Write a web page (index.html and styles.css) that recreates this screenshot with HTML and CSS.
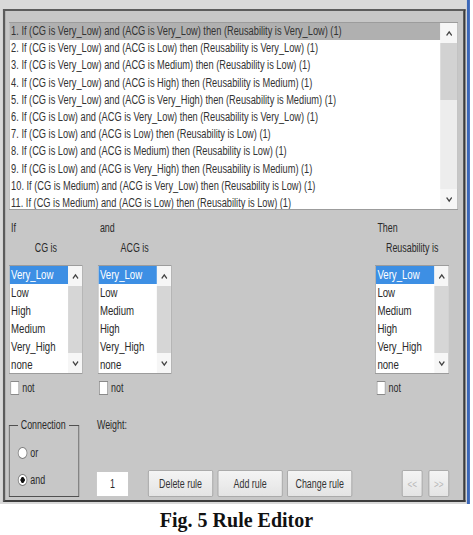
FILE: index.html
```html
<!DOCTYPE html>
<html lang="en">
<head>
  <meta charset="UTF-8" />
  <title>Rule Editor</title>
  <link rel="stylesheet" href="styles.css">
</head>
<body>
  <div class="shot">
    <div class="window">
      <div class="frame">
        <div class="rules">
          <ul class="rule-items">
            <li class="sel">1. If (CG is Very_Low) and (ACG is Very_Low) then (Reusability is Very_Low) (1)</li>
            <li>2. If (CG is Very_Low) and (ACG is Low) then (Reusability is Very_Low) (1)</li>
            <li>3. If (CG is Very_Low) and (ACG is Medium) then (Reusability is Low) (1)</li>
            <li>4. If (CG is Very_Low) and (ACG is High) then (Reusability is Medium) (1)</li>
            <li>5. If (CG is Very_Low) and (ACG is Very_High) then (Reusability is Medium) (1)</li>
            <li>6. If (CG is Low) and (ACG is Very_Low) then (Reusability is Very_Low) (1)</li>
            <li>7. If (CG is Low) and (ACG is Low) then (Reusability is Low) (1)</li>
            <li>8. If (CG is Low) and (ACG is Medium) then (Reusability is Low) (1)</li>
            <li>9. If (CG is Low) and (ACG is Very_High) then (Reusability is Medium) (1)</li>
            <li>10. If (CG is Medium) and (ACG is Very_Low) then (Reusability is Low) (1)</li>
            <li>11. If (CG is Medium) and (ACG is Low) then (Reusability is Low) (1)</li>
          </ul>
          <div class="vscroll big">
            <span class="btn"><svg width="10" height="7" viewBox="0 0 10 7"><polyline points="1.5,5.5 5,2 8.5,5.5" /></svg></span>
            <span class="thumb"></span>
            <span class="track"></span>
            <span class="btn"><svg width="10" height="7" viewBox="0 0 10 7"><polyline points="1.5,1.5 5,5 8.5,1.5" /></svg></span>
          </div>
        </div>

        <div class="vars">
          <div class="var">
            <div class="cap">If</div>
            <div class="name">CG is</div>
            <div class="list">
              <ul>
                <li class="sel">Very_Low</li>
                <li>Low</li>
                <li>High</li>
                <li>Medium</li>
                <li>Very_High</li>
                <li>none</li>
              </ul>
              <div class="vscroll">
                <span class="btn"><svg width="10" height="7" viewBox="0 0 10 7"><polyline points="1.5,5.5 5,2 8.5,5.5" /></svg></span>
                <span class="track"></span>
                <span class="btn"><svg width="10" height="7" viewBox="0 0 10 7"><polyline points="1.5,1.5 5,5 8.5,1.5" /></svg></span>
              </div>
            </div>
            <div class="not"><span class="box"></span>not</div>
          </div>

          <div class="var">
            <div class="cap">and</div>
            <div class="name">ACG is</div>
            <div class="list">
              <ul>
                <li class="sel">Very_Low</li>
                <li>Low</li>
                <li>Medium</li>
                <li>High</li>
                <li>Very_High</li>
                <li>none</li>
              </ul>
              <div class="vscroll">
                <span class="btn"><svg width="10" height="7" viewBox="0 0 10 7"><polyline points="1.5,5.5 5,2 8.5,5.5" /></svg></span>
                <span class="track"></span>
                <span class="btn"><svg width="10" height="7" viewBox="0 0 10 7"><polyline points="1.5,1.5 5,5 8.5,1.5" /></svg></span>
              </div>
            </div>
            <div class="not"><span class="box"></span>not</div>
          </div>

          <div class="var then">
            <div class="cap">Then</div>
            <div class="name">Reusability is</div>
            <div class="list">
              <ul>
                <li class="sel">Very_Low</li>
                <li>Low</li>
                <li>Medium</li>
                <li>High</li>
                <li>Very_High</li>
                <li>none</li>
              </ul>
              <div class="vscroll">
                <span class="btn"><svg width="10" height="7" viewBox="0 0 10 7"><polyline points="1.5,5.5 5,2 8.5,5.5" /></svg></span>
                <span class="track"></span>
                <span class="btn"><svg width="10" height="7" viewBox="0 0 10 7"><polyline points="1.5,1.5 5,5 8.5,1.5" /></svg></span>
              </div>
            </div>
            <div class="not"><span class="box"></span>not</div>
          </div>
        </div>

        <div class="bottom">
          <fieldset class="conn">
            <legend>Connection</legend>
            <div class="radio"><span class="dot"></span>or</div>
            <div class="radio on"><span class="dot"></span>and</div>
          </fieldset>
          <div class="weight">
            <div class="wlabel">Weight:</div>
            <div class="actions">
              <div class="winput">1</div>
              <button class="button">Delete rule</button>
              <button class="button">Add rule</button>
              <button class="button">Change rule</button>
              <button class="button nav prev">&lt;&lt;</button>
              <button class="button nav">&gt;&gt;</button>
            </div>
          </div>
        </div>
      </div>
    </div>
  </div>
  <p class="caption">Fig. 5 Rule Editor</p>
</body>
</html>
```

FILE: styles.css
```css
body {
  margin: 0;
  background: #ffffff;
  font-family: "Liberation Sans", Arial, sans-serif;
  color: #2a2a2a;
}

/* the dialog was captured squeezed sideways: lay it out at full size,
   then narrow it to the screenshot width */
.shot {
  width: 470px;
  height: 504px;
  overflow: hidden;
}

.window {
  width: 625px;
  padding: 9px 2px 2px 4px;
  background: #d9d9d9;
  border-right: 4px solid #3b67b8;
  transform: scaleX(0.74);
  transform-origin: 0 0;
}

.frame {
  border-style: solid;
  border-width: 2px 3px;
  border-color: #5c5c5c #3c3c3c #3c3c3c #5c5c5c;
  background: #c7c7c7;
  padding: 11px 7px 3px 5px;
}

/* rule list */
.rules {
  display: flex;
  height: 188px;
  background: #fff;
  border: 1px solid #9c9c9c;
  box-sizing: border-box;
  overflow: hidden;
}

.rule-items {
  flex: 1;
  list-style: none;
  margin: 0;
  padding: 0;
  font-size: 12.5px;
  color: #333;
}

.rule-items li {
  height: 17.2px;
  line-height: 17.2px;
  padding-left: 2px;
  white-space: nowrap;
}

.rule-items li.sel {
  background: #b0b0b0;
}

.vscroll {
  display: flex;
  flex-direction: column;
  width: 19px;
  background: #f6f6f6;
}

.vscroll.big {
  width: 23px;
}

.vscroll .btn {
  display: flex;
  align-items: center;
  justify-content: center;
  height: 20px;
}

.vscroll svg {
  fill: none;
  stroke: #444;
  stroke-width: 1.6;
}

.vscroll .thumb {
  height: 57px;
  background: #d2d2d2;
}

.vscroll .track {
  flex: 1;
  background: #d6d6d6;
}

.vscroll.big .track {
  background: #ededed;
}

/* variables */
.vars {
  display: flex;
  margin-top: 8px;
  padding-right: 12px;
}

.var {
  width: 100px;
  font-size: 12px;
}

.var + .var {
  margin-left: 20px;
}

.var.then {
  margin-left: auto;
}

.cap {
  line-height: 20px;
  padding-left: 3px;
}

.name {
  line-height: 20px;
  text-align: center;
}

.list {
  display: flex;
  height: 109px;
  margin-top: 7px;
  background: #fff;
  border: 1px solid #9c9c9c;
  box-sizing: border-box;
  overflow: hidden;
}

.list ul {
  flex: 1;
  list-style: none;
  margin: 0;
  padding: 0;
  font-size: 13px;
}

.list li {
  height: 18px;
  line-height: 18px;
  padding-left: 2px;
}

.list li.sel {
  background: #3d8fe4;
  color: #fff;
}

.not {
  display: flex;
  align-items: center;
  gap: 4px;
  margin-top: 6px;
  height: 15px;
  padding-left: 2px;
}

.box {
  width: 12px;
  height: 14px;
  background: #fff;
  border: 1px solid #8a8a8a;
  box-sizing: border-box;
}

/* bottom */
.bottom {
  display: flex;
  margin-top: 23px;
  gap: 24px;
}

.conn {
  width: 95px;
  min-width: 0;
  height: 79px;
  margin: 0;
  padding: 7px 0 0 11px;
  box-sizing: border-box;
  border: 1px solid #505050;
  font-size: 12px;
}

.conn legend {
  padding: 0 4px;
}

.radio {
  display: flex;
  align-items: center;
  gap: 4px;
  height: 27px;
}

.dot {
  width: 13px;
  height: 12px;
  border-radius: 50%;
  background: #fff;
  border: 1px solid #7a7a7a;
  box-sizing: border-box;
}

.radio.on .dot {
  background: radial-gradient(circle, #111 0 2.6px, #fff 3.2px);
}

.weight {
  flex: 1;
  font-size: 12px;
}

.wlabel {
  line-height: 14px;
}

.actions {
  display: flex;
  align-items: center;
  margin-top: 38px;
  gap: 6px;
}

.winput {
  width: 42px;
  height: 24px;
  line-height: 24px;
  text-align: center;
  background: #fff;
  margin-right: 21px;
}

.button {
  width: 88px;
  height: 27px;
  padding: 0;
  font-family: inherit;
  font-size: 12px;
  color: #333;
  background: linear-gradient(#f4f4f4, #e4e4e4);
  border: 1px solid #a6a6a6;
  border-radius: 2px;
}

.button.nav {
  width: 28px;
  color: #b8b8b8;
  font-size: 11px;
}

.button.prev {
  margin-left: 61px;
  margin-right: 2px;
}

.caption {
  margin: 5px 0 0;
  text-align: center;
  font-family: "Liberation Serif", serif;
  font-weight: bold;
  font-size: 20px;
  color: #111;
}
```
